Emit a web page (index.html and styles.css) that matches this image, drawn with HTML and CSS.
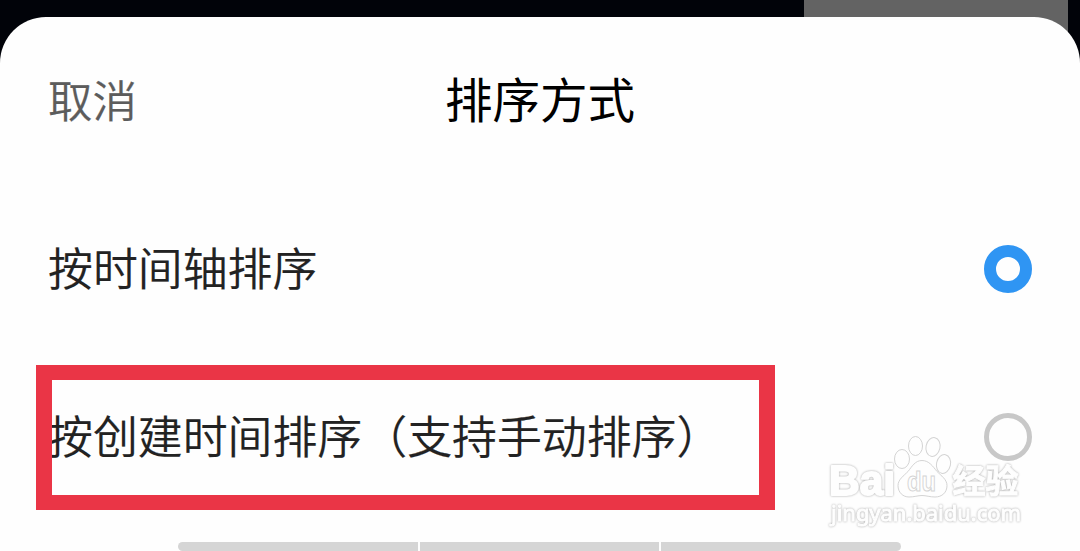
FILE: index.html
```html
<!DOCTYPE html>
<html lang="zh-CN">
<head>
    <meta charset="UTF-8">
    <meta name="viewport" content="width=device-width, initial-scale=1.0">
    <title>排序方式</title>
    <link rel="stylesheet" href="styles.css">
</head>
<body>
    <div class="backdrop"></div>
    <div class="sheet">
        <div class="header">
            <span class="cancel">取消</span>
            <span class="title">排序方式</span>
        </div>
        <div class="option">
            <span class="label">按时间轴排序</span>
            <span class="radio checked"></span>
        </div>
        <div class="option">
            <span class="label">按创建时间排序（支持手动排序）</span>
            <span class="radio"></span>
            <div class="highlight"></div>
        </div>
        <div class="navbar">
            <span></span>
            <span></span>
            <span></span>
        </div>
    </div>

    <svg class="watermark" width="210" height="100" viewBox="0 0 210 100">
        <g class="paw">
            <ellipse cx="81" cy="29" rx="7.5" ry="9.5"/>
            <ellipse cx="94.5" cy="16" rx="7" ry="9.5"/>
            <ellipse cx="112" cy="17" rx="7" ry="9.5" transform="rotate(12 112 17)"/>
            <ellipse cx="122.5" cy="34" rx="7" ry="9.5" transform="rotate(12 122.5 34)"/>
            <path d="M101 30.5c-7 0-10 6-14 11-4 4-10 8-10 14 0 7 5 11.5 11 11.5 5 0 9-1.5 13-1.5s8 1.5 13 1.5c7 0 12-4.5 12-11.5 0-6-6-10-10-14-4-5-8-11-15-11z"/>
            <text class="du" x="86" y="61" textLength="29" lengthAdjust="spacingAndGlyphs">du</text>
        </g>
        <text class="outlined brand" x="8" y="65" textLength="66" lengthAdjust="spacingAndGlyphs">Bai</text>
        <text class="outlined jingyan" x="131.5" y="63" textLength="66" lengthAdjust="spacingAndGlyphs">经验</text>
        <text class="outlined url" x="10" y="91" textLength="190" lengthAdjust="spacingAndGlyphs">jingyan.baidu.com</text>
    </svg>
</body>
</html>
```

FILE: styles.css
```css
body {
    margin: 0;
    height: 551px;
    overflow: hidden;
    position: relative;
    box-sizing: border-box;
    padding-top: 17px;
    background-color: #010309;
    font-family: "Noto Sans CJK SC", sans-serif;
}

.backdrop {
    position: absolute;
    top: 0;
    right: 12px;
    width: 264px;
    height: 60px;
    background-color: #636363;
}

.sheet {
    position: relative;
    display: flex;
    flex-direction: column;
    height: 534px;
    background-color: #fefefe;
    border-radius: 46px 46px 0 0;
}

.header {
    display: grid;
    grid-template-columns: 1fr auto 1fr;
    align-items: center;
    height: 168px;
    padding: 0 48px;
}

.cancel {
    padding-bottom: 6px;
    font-size: 44.5px;
    font-weight: 350;
    color: #5c5c5c;
    -webkit-text-stroke: 0.2px #5c5c5c;
}

.title {
    padding-bottom: 8px;
    font-size: 47.5px;
    color: #000;
}

.option {
    position: relative;
    display: flex;
    align-items: center;
    justify-content: space-between;
    height: 168px;
    padding: 0 48px;
}

.label {
    padding-bottom: 6px;
    font-size: 44.9px;
    font-weight: 350;
    color: #222;
    white-space: nowrap;
    -webkit-text-stroke: 0.2px #222;
}

.radio {
    box-sizing: border-box;
    width: 48px;
    height: 48px;
    border: 5px solid #c8c8c8;
    border-radius: 50%;
}

.radio.checked {
    border: 12px solid #2f95f3;
}

.highlight {
    position: absolute;
    left: 36px;
    top: 12px;
    box-sizing: border-box;
    width: 739px;
    height: 145px;
    border: solid #ea3546;
    border-width: 15px 16px;
}

.navbar {
    display: flex;
    gap: 2px;
    width: 723px;
    height: 9px;
    margin: auto 0 0 178px;
    border-radius: 5px;
    overflow: hidden;
}

.navbar span {
    flex: 1;
    background-color: #d5d5d5;
}

.watermark {
    position: absolute;
    left: 821px;
    top: 430px;
}

.paw {
    fill: #fefefe;
    stroke: #d4d4d4;
    stroke-width: 1;
}

.outlined {
    fill: #fefefe;
    stroke: #fefefe;
    stroke-width: 2;
    stroke-linejoin: round;
    filter: drop-shadow(0 0 0.8px #a8a8a8);
}

.brand {
    font: bold 42px "Liberation Sans", sans-serif;
}

.du {
    font: bold 27px "Liberation Sans", sans-serif;
}

.jingyan {
    font: bold 33px "Noto Sans CJK SC", sans-serif;
    stroke-width: 1;
}

.url {
    font: 22px "Noto Sans", sans-serif;
    stroke-width: 1;
}
```
